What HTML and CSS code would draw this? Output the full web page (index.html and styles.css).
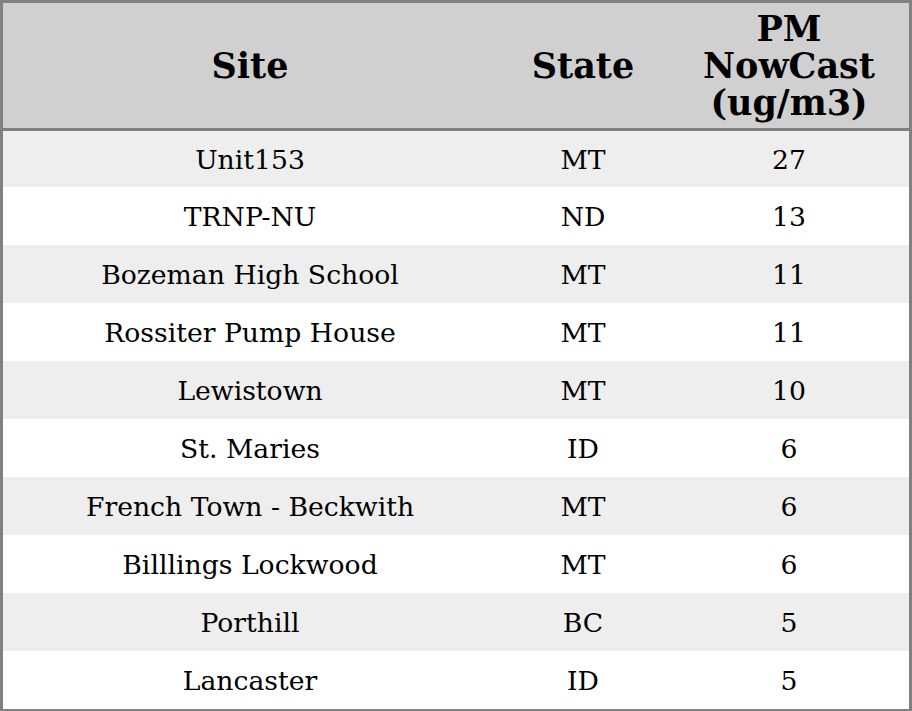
FILE: index.html
```html
<!DOCTYPE html>
<html>
<head>
<meta charset="utf-8">
<link rel="stylesheet" href="styles.css">
</head>
<body>
<table class="aq-table">
  <colgroup>
    <col class="col-site">
    <col class="col-state">
    <col class="col-pm">
  </colgroup>
  <thead>
    <tr>
      <th>Site</th>
      <th>State</th>
      <th>PM<br>NowCast<br>(ug/m3)</th>
    </tr>
  </thead>
  <tbody>
    <tr><td>Unit153</td><td>MT</td><td>27</td></tr>
    <tr><td>TRNP-NU</td><td>ND</td><td>13</td></tr>
    <tr><td>Bozeman High School</td><td>MT</td><td>11</td></tr>
    <tr><td>Rossiter Pump House</td><td>MT</td><td>11</td></tr>
    <tr><td>Lewistown</td><td>MT</td><td>10</td></tr>
    <tr><td>St. Maries</td><td>ID</td><td>6</td></tr>
    <tr><td>French Town - Beckwith</td><td>MT</td><td>6</td></tr>
    <tr><td>Billlings Lockwood</td><td>MT</td><td>6</td></tr>
    <tr><td>Porthill</td><td>BC</td><td>5</td></tr>
    <tr><td>Lancaster</td><td>ID</td><td>5</td></tr>
  </tbody>
</table>
</body>
</html>
```
FILE: styles.css
```css
html, body {
  margin: 0;
  padding: 0;
  background: #ffffff;
}

.aq-table {
  width: 912px;
  table-layout: fixed;
  border-collapse: separate;
  border-spacing: 0;
  border: 3px solid #808080;
  font-family: "DejaVu Serif", serif;
  color: #000;
}

.col-site { width: 494px; }
.col-state { width: 172px; }
.col-pm { width: 240px; }

.aq-table th {
  background: #d0d0d0;
  font-size: 35px;
  font-weight: bold;
  line-height: 37px;
  height: 125px;
  padding: 0;
  text-align: center;
  vertical-align: middle;
  border-bottom: 3px solid #808080;
}

.aq-table td {
  font-size: 26.67px;
  line-height: 31px;
  height: 58px;
  padding: 0;
  text-align: center;
  vertical-align: middle;
}

.aq-table tbody tr:first-child td {
  height: 56px;
}

.aq-table tbody tr:nth-child(odd) td {
  background: #eeeeee;
}
```
